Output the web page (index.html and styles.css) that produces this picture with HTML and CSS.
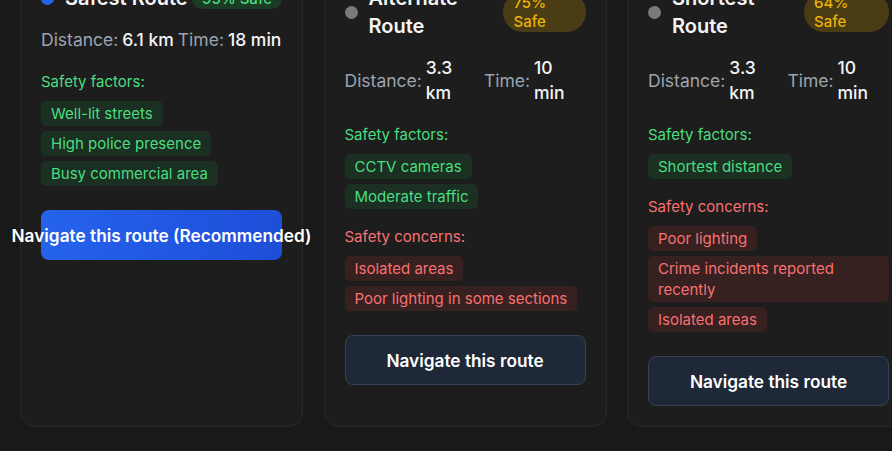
FILE: index.html
```html
<!DOCTYPE html>
<html lang="en">
<head>
<meta charset="utf-8">
<title>Route options</title>
<link rel="stylesheet" href="styles.css">
</head>
<body>
<div class="routes">
  <div class="card">
    <div class="card-head">
      <div class="title-wrap">
        <span class="dot dot-blue"></span>
        <h3 class="title">Safest Route</h3>
      </div>
      <span class="badge badge-green">95% Safe</span>
    </div>
    <div class="stats">
      <span class="stat-label">Distance:</span>
      <span class="stat-value">6.1 km</span>
      <span class="stat-label">Time:</span>
      <span class="stat-value">18 min</span>
    </div>
    <div class="section">
      <div class="section-label good">Safety factors:</div>
      <div class="tags">
        <span class="tag tag-good">Well-lit streets</span>
        <span class="tag tag-good">High police presence</span>
        <span class="tag tag-good">Busy commercial area</span>
      </div>
    </div>
    <button class="btn btn-primary">Navigate this route (Recommended)</button>
  </div>

  <div class="card">
    <div class="card-head">
      <div class="title-wrap">
        <span class="dot dot-grey"></span>
        <h3 class="title">Alternate Route</h3>
      </div>
      <span class="badge badge-yellow">75% Safe</span>
    </div>
    <div class="stats">
      <span class="stat-label">Distance:</span>
      <span class="stat-value">3.3 km</span>
      <span class="stat-label">Time:</span>
      <span class="stat-value">10 min</span>
    </div>
    <div class="section">
      <div class="section-label good">Safety factors:</div>
      <div class="tags">
        <span class="tag tag-good">CCTV cameras</span>
        <span class="tag tag-good">Moderate traffic</span>
      </div>
    </div>
    <div class="section">
      <div class="section-label bad">Safety concerns:</div>
      <div class="tags">
        <span class="tag tag-bad">Isolated areas</span>
        <span class="tag tag-bad">Poor lighting in some sections</span>
      </div>
    </div>
    <button class="btn btn-dark">Navigate this route</button>
  </div>

  <div class="card">
    <div class="card-head">
      <div class="title-wrap">
        <span class="dot dot-grey"></span>
        <h3 class="title">Shortest Route</h3>
      </div>
      <span class="badge badge-yellow">64% Safe</span>
    </div>
    <div class="stats">
      <span class="stat-label">Distance:</span>
      <span class="stat-value">3.3 km</span>
      <span class="stat-label">Time:</span>
      <span class="stat-value">10 min</span>
    </div>
    <div class="section">
      <div class="section-label good">Safety factors:</div>
      <div class="tags">
        <span class="tag tag-good">Shortest distance</span>
      </div>
    </div>
    <div class="section">
      <div class="section-label bad">Safety concerns:</div>
      <div class="tags">
        <span class="tag tag-bad">Poor lighting</span>
        <span class="tag tag-bad">Crime incidents reported recently</span>
        <span class="tag tag-bad">Isolated areas</span>
      </div>
    </div>
    <button class="btn btn-dark">Navigate this route</button>
  </div>
</div>
</body>
</html>
```

FILE: styles.css
```css
html, body {
  margin: 0;
  padding: 0;
  overflow: hidden;
  background: #191919;
}

body {
  font-family: "Inter", "Noto Sans", sans-serif;
  color: #f3f4f6;
  height: 451px;
}

.routes {
  display: grid;
  grid-template-columns: repeat(3, 283px);
  column-gap: 20.5px;
  padding-left: 20px;
  margin-top: -37px;
  width: max-content;
}

.card {
  background: #1d1d1d;
  border: 1px solid #282828;
  border-radius: 14px;
  padding: 20px;
  display: flex;
  flex-direction: column;
  align-items: stretch;
}

.card-head {
  display: flex;
  align-items: center;
  justify-content: space-between;
  gap: 2px;
  margin-bottom: 15px;
}

.title-wrap {
  display: flex;
  align-items: center;
  gap: 11px;
}

.dot {
  width: 13px;
  height: 13px;
  border-radius: 50%;
  flex: none;
}

.dot-blue { background: #2563eb; }
.dot-grey { background: #7a7a7a; }

.title {
  margin: 0;
  font-size: 20px;
  line-height: 28px;
  font-weight: 600;
  color: #f5f5f5;
}

.badge {
  border-radius: 999px;
  padding: 1px 10px;
  font-size: 15px;
  line-height: 19px;
  font-weight: 500;
}

.badge-green { background: #1c3b25; color: #4ade80; }
.badge-yellow { background: #4a3c15; color: #eab308; }

.stats {
  display: flex;
  align-items: center;
  gap: 4px;
  font-size: 17.5px;
  line-height: 25px;
  margin-bottom: 19px;
}

.stat-label { color: #9ca3af; }
.stat-value { color: #f3f4f6; font-weight: 500; }

.section { margin-bottom: 17px; }

.section-label {
  font-size: 15px;
  line-height: 22px;
  margin-bottom: 8px;
}

.good { color: #4ade80; }
.bad { color: #f87171; }

.tags {
  display: flex;
  flex-direction: column;
  align-items: flex-start;
  gap: 5px;
}

.tag {
  font-size: 15px;
  line-height: 21px;
  padding: 2px 10px;
  border-radius: 5px;
}

.tag-good { background: #1b2f22; color: #4ade80; }
.tag-bad { background: #362020; color: #f87171; }

.btn {
  margin-top: 7px;
  height: 50px;
  border-radius: 8px;
  font-family: inherit;
  font-size: 17.25px;
  font-weight: 600;
  color: #ffffff;
  display: flex;
  align-items: center;
  justify-content: center;
  white-space: nowrap;
  cursor: pointer;
  padding: 0;
}

.btn-primary {
  background: linear-gradient(100deg, #2563eb, #1d4ed8);
  border: none;
}

.btn-dark {
  background: #1e2837;
  border: 1px solid #364152;
}
```
